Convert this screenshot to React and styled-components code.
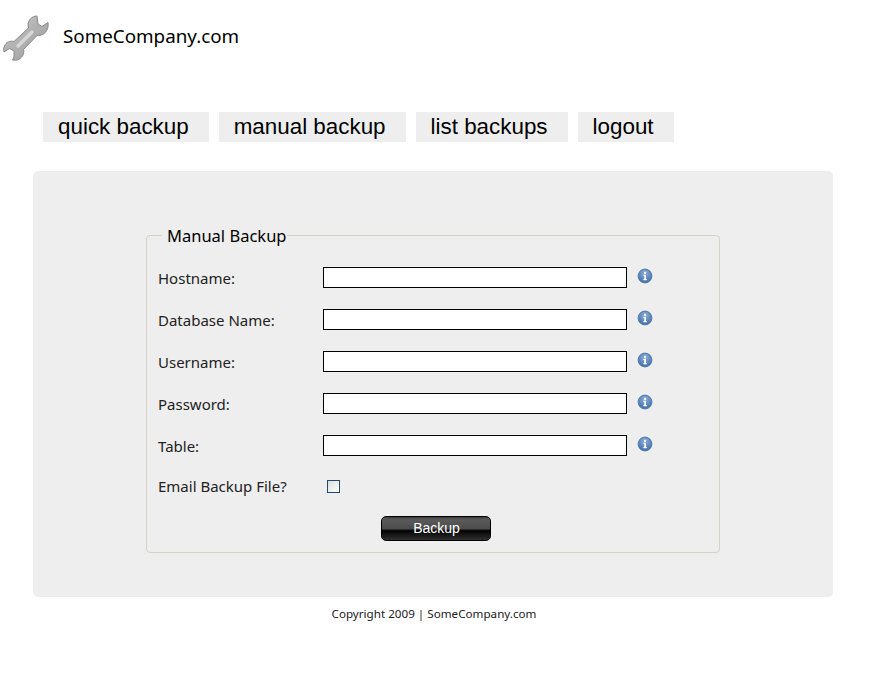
import React from 'react';
import styled, { createGlobalStyle } from 'styled-components';

const GlobalStyle = createGlobalStyle`
  html, body {
    margin: 0;
    padding: 0;
    background: #fff;
  }
`;

const Page = styled.div`
  width: 872px;
  height: 676px;
  overflow: hidden;
  font-family: "Noto Sans", sans-serif;
`;

// Header
const Header = styled.div`
  display: flex;
  align-items: center;
  height: 72px;
  padding: 0 0 0 3px;
`;

const Logo = styled.svg`
  width: 46px;
  height: 46px;
  margin-top: 4px;
  flex: none;
`;

const SiteName = styled.div`
  margin-left: 14px;
  font-size: 18.8px;
  color: #000;
`;

// Nav
const Nav = styled.div`
  display: flex;
  gap: 10px;
  margin: 40px 0 0 43px;
`;

const NavItem = styled.a`
  display: block;
  height: 30px;
  line-height: 30px;
  padding: 0 20px 0 15px;
  background: #eeeeee;
  color: #000;
  font-family: "Liberation Sans", Arial, sans-serif;
  font-size: 22.4px;
  white-space: nowrap;
`;

// Main panel
const Panel = styled.div`
  box-sizing: border-box;
  width: 800px;
  height: 426px;
  margin: 29px 0 0 33px;
  padding: 53px 113px 0;
  background: #eeeeee;
  border-radius: 5px;
`;

const Fieldset = styled.fieldset`
  box-sizing: border-box;
  width: 574px;
  height: 329px;
  margin: 0;
  padding: 21px 11px 0;
  border: 1px solid #d3d3c8;
  border-radius: 4px;
`;

const Legend = styled.legend`
  margin-left: 4px;
  padding: 2px 1px 0 5px;
  font-size: 16.5px;
  line-height: 20px;
  color: #000;
`;

const Row = styled.div`
  display: flex;
  align-items: center;
  height: 21px;
  margin-bottom: 21px;
`;

const EmailRow = styled(Row)`
  margin-top: -1px;
`;

const Label = styled.label`
  width: 165px;
  flex: none;
  font-size: 15px;
  color: #222;
`;

const EmailLabel = styled(Label)`
  padding-bottom: 2px;
`;

const TextInput = styled.input`
  box-sizing: border-box;
  width: 304px;
  height: 21px;
  margin: 0;
  padding: 1px 3px;
  background: #fff;
  border: 1px solid #000;
  border-radius: 0;
  outline: none;
`;

const Info = styled.svg`
  width: 16px;
  height: 16px;
  margin: -4px 0 0 10px;
  flex: none;
`;

const CheckBox = styled.span`
  box-sizing: border-box;
  display: block;
  width: 13px;
  height: 13px;
  margin-left: 4px;
  border: 1px solid #1d4a6e;
  background: linear-gradient(135deg, #dcdcd6, #ffffff);
`;

const ButtonRow = styled.div`
  display: flex;
  justify-content: center;
  margin: -2px 0 0 5px;
`;

const Button = styled.button`
  box-sizing: border-box;
  width: 110px;
  height: 25px;
  padding: 0 0 2px 2px;
  border: 1px solid #000;
  border-radius: 5px;
  color: #fff;
  font-family: "Liberation Sans", Arial, sans-serif;
  font-size: 14px;
  background: linear-gradient(
    to bottom,
    #3c3c3c 0%,
    #5a5a5a 12%,
    #4c4c4c 50%,
    #000 60%,
    #111 72%,
    #2e2e2e 100%
  );
`;

const Footer = styled.div`
  width: 802px;
  margin: 8px 0 0 33px;
  text-align: center;
  font-size: 11.65px;
  line-height: 17px;
  color: #222;
`;

const InfoIcon = ({ id }) => (
  <Info viewBox="0 0 16 16">
    <defs>
      <radialGradient id={id} cx="50%" cy="30%" r="70%">
        <stop offset="0%" stopColor="#8fb0d8" />
        <stop offset="100%" stopColor="#3f6ea8" />
      </radialGradient>
    </defs>
    <circle cx="8" cy="8" r="6.9" fill={`url(#${id})`} stroke="#4c78ae" strokeWidth="1" />
    <rect x="7" y="3.8" width="2" height="2" fill="#fff" />
    <path d="M6.4 6.8h2.6v4.2h0.8v1.2H6.4V11h0.8V8H6.4z" fill="#fff" />
  </Info>
);

const fields = ['Hostname:', 'Database Name:', 'Username:', 'Password:', 'Table:'];
const links = ['quick backup', 'manual backup', 'list backups', 'logout'];

const App = () => {
  return (
    <Page>
      <GlobalStyle />
      <Header>
        <Logo viewBox="0 0 46 46">
          <defs>
            <linearGradient id="wrench" x1="0" y1="0" x2="1" y2="1">
              <stop offset="0%" stopColor="#c8c8c8" />
              <stop offset="100%" stopColor="#9a9a9a" />
            </linearGradient>
          </defs>
          <path
            d="M34 1 C29 1 25 5 25 10 L25.5 13 L11 26.5 C7 25.5 3 27 1.5 31 C0.5 33 0.5 35 1 37 L6.5 33.5 L11 36 L11 42 L9.5 45 C14 46 18 44 20 40 C21 38 21 36 20.5 34.5 L34 20.5 C38 21 42 19 44 15 C45 13 45.5 10 45 7.5 L39 11.5 L35 9 Z"
            fill="url(#wrench)"
            stroke="#8a8a8a"
            strokeWidth="1"
          />
          <path d="M15 31 L29 17" stroke="#d6d6d6" strokeWidth="3.5" strokeLinecap="round" />
        </Logo>
        <SiteName>SomeCompany.com</SiteName>
      </Header>

      <Nav>
        {links.map((l) => (
          <NavItem key={l}>{l}</NavItem>
        ))}
      </Nav>

      <Panel>
        <Fieldset>
          <Legend>Manual Backup</Legend>
          {fields.map((f, i) => (
            <Row key={f}>
              <Label>{f}</Label>
              <TextInput type="text" />
              <InfoIcon id={`info${i}`} />
            </Row>
          ))}
          <EmailRow>
            <EmailLabel>Email Backup File?</EmailLabel>
            <CheckBox />
          </EmailRow>
          <ButtonRow>
            <Button>Backup</Button>
          </ButtonRow>
        </Fieldset>
      </Panel>

      <Footer>Copyright 2009 | SomeCompany.com</Footer>
    </Page>
  );
};

export default App;
